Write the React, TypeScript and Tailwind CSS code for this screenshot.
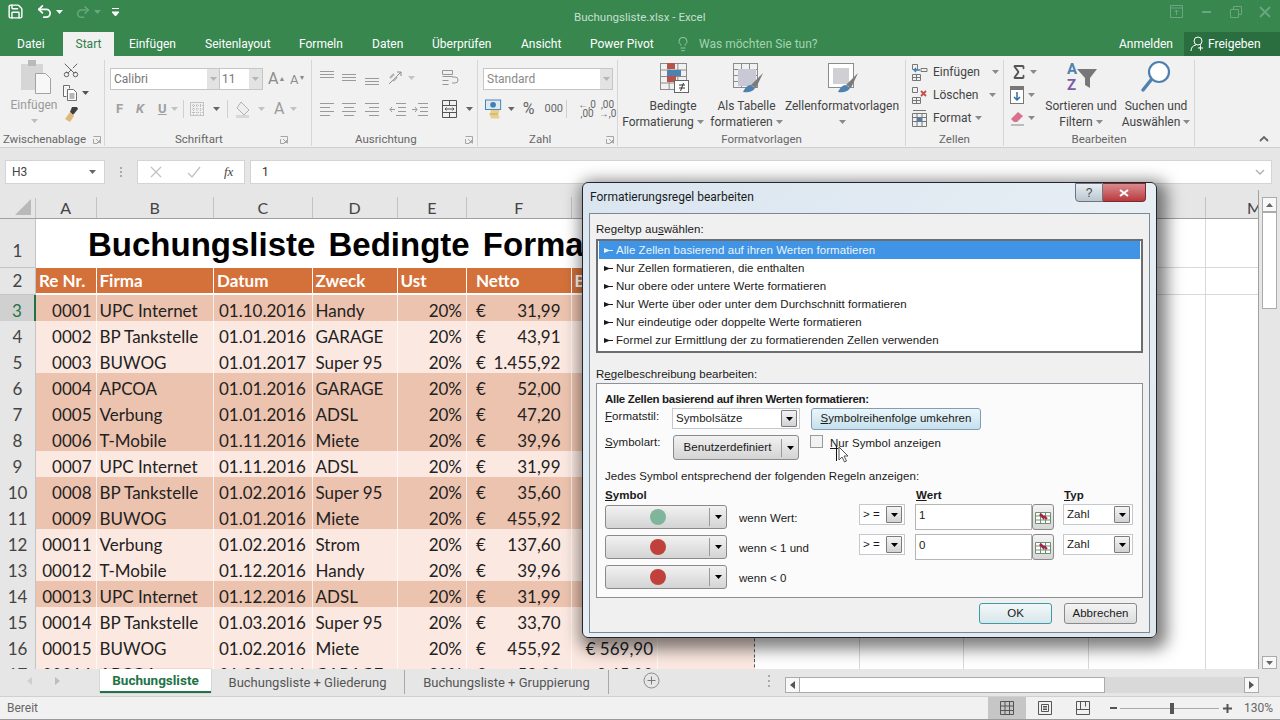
import type { ReactNode } from 'react';
import { Lightbulb, Redo2, Save, Scissors, Sigma, Undo2 } from 'lucide-react';

const sheetCols =
  'grid grid-cols-[36px_60.5px_117.5px_98.5px_85px_69.5px_104.5px_86.5px_97px_105px_104px_125px_117px_98px]';

const rows = [
  ['3', '0001', 'UPC Internet', '01.10.2016', 'Handy', '31,99', 1],
  ['4', '0002', 'BP Tankstelle', '01.01.2016', 'GARAGE', '43,91', 0],
  ['5', '0003', 'BUWOG', '01.01.2017', 'Super 95', '1.455,92', 0],
  ['6', '0004', 'APCOA', '01.01.2016', 'GARAGE', '52,00', 1],
  ['7', '0005', 'Verbung', '01.01.2016', 'ADSL', '47,20', 1],
  ['8', '0006', 'T-Mobile', '01.11.2016', 'Miete', '39,96', 1],
  ['9', '0007', 'UPC Internet', '01.11.2016', 'ADSL', '31,99', 0],
  ['10', '0008', 'BP Tankstelle', '01.02.2016', 'Super 95', '35,60', 1],
  ['11', '0009', 'BUWOG', '01.01.2016', 'Miete', '455,92', 1],
  ['12', '00011', 'Verbung', '01.02.2016', 'Strom', '137,60', 0],
  ['13', '00012', 'T-Mobile', '01.12.2016', 'Handy', '39,96', 0],
  ['14', '00013', 'UPC Internet', '01.12.2016', 'ADSL', '31,99', 1],
  ['15', '00014', 'BP Tankstelle', '01.03.2016', 'Super 95', '33,70', 0],
  ['16', '00015', 'BUWOG', '01.02.2016', 'Miete', '455,92', 0],
  ['17', '00016', 'APCOA', '01.03.2016', 'GARAGE', '52,00', 0],
] as const;

const ruleTypes = [
  'Alle Zellen basierend auf ihren Werten formatieren',
  'Nur Zellen formatieren, die enthalten',
  'Nur obere oder untere Werte formatieren',
  'Nur Werte über oder unter dem Durchschnitt formatieren',
  'Nur eindeutige oder doppelte Werte formatieren',
  'Formel zur Ermittlung der zu formatierenden Zellen verwenden',
];

function Caret({ className = 'text-[#8a8a8a]' }: { className?: string }) {
  return (
    <svg width="7" height="4" viewBox="0 0 7 4" className={className}>
      <path d="M0 0h7L3.5 4z" fill="currentColor" />
    </svg>
  );
}

function Lines({ widths, align = 'left', color = '#9a9a9a' }: { widths: number[]; align?: string; color?: string }) {
  return (
    <svg width="16" height="14" viewBox="0 0 16 14">
      {widths.map((w, i) => {
        const x = align === 'left' ? 1 : align === 'right' ? 15 - w : 8 - w / 2;
        return <rect key={i} x={x} y={1 + i * 4} width={w} height="1" fill={color} />;
      })}
    </svg>
  );
}

function VAlign({ pos }: { pos: number }) {
  return (
    <svg width="16" height="14" viewBox="0 0 16 14">
      {[0, 1, 2].map((i) => (
        <rect key={i} x="1" y={pos + i * 3} width="14" height="1" fill="#9a9a9a" />
      ))}
    </svg>
  );
}

function Launcher() {
  return (
    <svg width="8" height="8" viewBox="0 0 8 8" className="shrink-0">
      <path d="M.5.5h7v7M.5 3v4.500h4M3 3l3.500 3.500M6.500 4v2.500H4" fill="none" stroke="#a6a6a6" />
    </svg>
  );
}

function Group({ width, label, launcher, children, labelPad = '' }: { width: string; label: string; launcher?: boolean; children: ReactNode; labelPad?: string }) {
  return (
    <div className={`${width} shrink-0 flex flex-col h-[86px] mt-[4px] border-r border-[#d6d6d6]`}>
      <div className="flex-1 min-h-0">{children}</div>
      <div className={`h-[12px] flex items-center justify-center gap-[7px] text-[11.500px] text-[#666] whitespace-nowrap ${labelPad}`}>
        <span>{label}</span>
        {launcher && <Launcher />}
      </div>
    </div>
  );
}

function BigIcon({ children }: { children: ReactNode }) {
  return <svg width="36" height="34" viewBox="0 0 36 34">{children}</svg>;
}

function TableGrid({ x, y, w, h, n = 3, m = 4 }: { x: number; y: number; w: number; h: number; n?: number; m?: number }) {
  return (
    <g stroke="#8c8c8c" strokeWidth="1" fill="none">
      <rect x={x + 0.5} y={y + 0.5} width={w} height={h} />
      {Array.from({ length: n - 1 }, (_, i) => (
        <path key={i} d={`M${x + ((i + 1) * w) / n + 0.5} ${y}v${h}`} />
      ))}
      {Array.from({ length: m - 1 }, (_, i) => (
        <path key={i} d={`M${x} ${y + ((i + 1) * h) / m + 0.5}h${w}`} />
      ))}
    </g>
  );
}

function Brush() {
  return (
    <g>
      <path d="M34 13 27 28l-5-3z" fill="#7b7b7b" />
      <path d="M22 25c-4 0-6 3-8 7 4 1 10 0 12-4z" fill="#4f81ae" />
    </g>
  );
}

function Ribbon() {
  return (
    <div className="h-[92px] shrink-0 bg-[#f1f1f1] border-b border-[#cfcfcf] flex text-[#444]">
      <Group width="w-[105px]" label="Zwischenablage" launcher>
        <div className="flex">
          <div className="w-[62px] flex flex-col items-center pl-[6px] text-[#9a9a9a] text-[12px]">
            <svg width="32" height="34" viewBox="0 0 32 34" className="ml-[6px]">
              <rect x="0" y="4" width="22" height="26" fill="#d6d6d6" />
              <rect x="7" y="0" width="8" height="6" fill="#b9b9b9" />
              <path d="M14.500 13.500h10l5 5v15h-15z" fill="#f7f7f7" stroke="#a3a3a3" />
            </svg>
            <span className="mt-[4px] leading-[15px]">Einfügen</span>
            <Caret className="text-[#bdbdbd] mt-[6px]" />
          </div>
          <div className="flex flex-col pt-[1px] gap-[5px]">
            <Scissors size={18} className="-rotate-90 text-[#5f5f5f]" strokeWidth={1.3} />
            <div className="flex items-center gap-[4px]">
              <svg width="16" height="17" viewBox="0 0 16 17">
                <path d="M1.500 1.500h6v3M1.500 1.500v11h3M5.500 5.500h6l3 3v8h-9z" fill="#fff" stroke="#6e6e6e" />
                <path d="M7.500 10h5M7.500 12h5M7.500 14h5" stroke="#6e6e6e" />
              </svg>
              <Caret className="text-[#555]" />
            </div>
            <svg width="18" height="18" viewBox="0 0 18 18">
              <path d="M10 1h5l1 2-5 6-3-3z" fill="#3f3f3f" />
              <path d="M8 6l4 4-4 6-5-3z" fill="#e0b878" />
            </svg>
          </div>
        </div>
      </Group>

      <Group width="w-[207px]" label="Schriftart" launcher labelPad="pl-[70px] !justify-start !gap-[57px]">
        <div className="flex flex-col">
          <div className="flex items-center pl-[5px] mt-[8px]">
            <div className="w-[110px] h-[22px] bg-white border border-[#c6c6c6] flex justify-between items-center text-[12px] text-[#777]">
              <span className="pl-[3px]">Calibri</span>
              <span className="w-[12px] h-full bg-[#e3e3e3] flex items-center justify-center"><Caret className="text-[#b5b5b5]" /></span>
            </div>
            <div className="w-[43px] h-[22px] bg-white border border-l-0 border-[#c6c6c6] flex justify-between items-center text-[12px] text-[#777]">
              <span className="pl-[2px]">11</span>
              <span className="w-[13px] h-full bg-[#e3e3e3] flex items-center justify-center"><Caret className="text-[#b5b5b5]" /></span>
            </div>
            <span className="ml-[5px] text-[16px] leading-none text-[#8c8c8c] w-[22px]">A<sup className="text-[7px]">▲</sup></span>
            <span className="text-[13px] leading-none text-[#8c8c8c]">A<sup className="text-[7px]">▼</sup></span>
          </div>
          <div className="flex items-center h-[20px] mt-[9px] text-[#a0a0a0] font-bold text-[13px]">
            <span className="ml-[11px] w-[20px]">F</span>
            <span className="w-[22px] italic">K</span>
            <span className="w-[13px] underline">U</span>
            <span className="w-[12px] flex"><Caret className="text-[#c2c2c2]" /></span>
            <span className="w-[1px] h-[18px] bg-[#d0d0d0] mr-[6px]" />
            <svg width="14" height="14" viewBox="0 0 14 14" className="mr-[9px]">
              <rect x=".5" y=".5" width="13" height="13" fill="none" stroke="#999" strokeDasharray="1 1" />
              <path d="M7 0v14M0 7h14M3.500 0v14M10.500 0v14M0 3.500h14M0 10.500h14" stroke="#bbb" strokeDasharray="1 1" />
            </svg>
            <Caret className="text-[#666]" />
            <span className="w-[1px] h-[18px] bg-[#d0d0d0] mx-[7px]" />
            <svg width="18" height="18" viewBox="0 0 18 18" className="mr-[5px]">
              <path d="M6 2l8 8-5 5-7-7z" fill="#eee" stroke="#b2b2b2" />
              <rect x="1" y="15" width="13" height="3" fill="#d8d8d8" />
            </svg>
            <Caret className="text-[#c2c2c2]" />
            <span className="ml-[9px] text-[16px] font-normal text-[#9a9a9a] w-[16px]">A</span>
            <Caret className="text-[#c2c2c2]" />
          </div>
        </div>
      </Group>

      <Group width="w-[166px]" label="Ausrichtung" launcher labelPad="pl-[43px] !justify-start !gap-[48px]">
        <div className="flex flex-col">
          <div className="flex items-center pl-[7px] mt-[7px] h-[22px]">
            <span className="w-[22px]"><VAlign pos={0} /></span>
            <span className="w-[23px]"><VAlign pos={3} /></span>
            <span className="w-[24px]"><VAlign pos={7} /></span>
            <svg width="18" height="16" viewBox="0 0 18 16" className="mr-[2px]">
              <path d="M1 14 13 2M9 2h4v4" fill="none" stroke="#8a8a8a" />
              <path d="M2 8l4-4M5 11l4-4" stroke="#b0b0b0" strokeWidth="2" />
            </svg>
            <Caret className="text-[#c2c2c2]" />
            <svg width="18" height="18" viewBox="0 0 18 18" className="ml-[26px]">
              <path d="M1.500 1.500h10v4h-10zM1.500 7.500h10M1.500 11.500h6M1.500 15.500h6M11 8h3q3 0 3 3t-3 3h-3" fill="none" stroke="#969696" />
            </svg>
          </div>
          <div className="flex items-center pl-[7px] mt-[9px] h-[22px]">
            <span className="w-[22px]"><Lines widths={[14, 10, 14, 10]} /></span>
            <span className="w-[23px]"><Lines widths={[14, 10, 14, 10]} align="center" /></span>
            <span className="w-[25px]"><Lines widths={[14, 10, 14, 10]} align="right" /></span>
            <svg width="17" height="14" viewBox="0 0 17 14" className="mr-[5px]">
              <path d="M7 1.500h10M9 5.500h8M9 9.500h8M7 13.500h10M6 7.500H1M3 5 1 7.500 3 10" fill="none" stroke="#9a9a9a" />
            </svg>
            <svg width="17" height="14" viewBox="0 0 17 14">
              <path d="M7 1.500h10M9 5.500h8M9 9.500h8M7 13.500h10M1 7.500h5M4 5l2 2.500L4 10" fill="none" stroke="#9a9a9a" />
            </svg>
            <svg width="15" height="18" viewBox="0 0 15 18" className="ml-[14px] mr-[9px]">
              <path d="M.5.500h14v17H.5zM.5 5.500h14M.5 12.500h14M7.500.500v5M7.500 12.500v5M3 9h9M4.500 7.500 3 9l1.500 1.500M10.500 7.500 12 9l-1.500 1.500" fill="none" stroke="#555" />
            </svg>
            <Caret className="text-[#666]" />
          </div>
        </div>
      </Group>

      <Group width="w-[140px]" label="Zahl" launcher labelPad="pl-[51px] !justify-start !gap-[55px]">
        <div className="flex flex-col">
          <div className="ml-[5px] mt-[8px] w-[130px] h-[22px] bg-white border border-[#c6c6c6] flex justify-between items-center text-[12px] text-[#8a8a8a]">
            <span className="pl-[3px]">Standard</span>
            <span className="w-[12px] h-full bg-[#e3e3e3] flex items-center justify-center"><Caret className="text-[#b5b5b5]" /></span>
          </div>
          <div className="flex items-center h-[22px] mt-[8px] pl-[7px] text-[#666]">
            <svg width="18" height="20" viewBox="0 0 18 20" className="mr-[6px]">
              <rect x=".5" y=".5" width="16" height="10" fill="#dfe9f2" stroke="#3f7fb3" />
              <circle cx="8.500" cy="5.500" r="3" fill="#3f7fb3" />
              <rect x="6" y="11" width="9" height="3" fill="#e8cf8d" />
              <rect x="5" y="14" width="9" height="3" fill="#dcbc6a" />
              <rect x="6" y="17" width="9" height="3" fill="#e8cf8d" />
            </svg>
            <Caret className="text-[#666]" />
            <span className="ml-[8px] w-[23px] text-[16px] leading-none">%</span>
            <span className="w-[23px] text-[11px]">000</span>
            <span className="w-[1px] h-[18px] bg-[#d0d0d0] mr-[9px]" />
            <span className="w-[23px] text-[10px] leading-[9px] text-center">←,0<br />,00</span>
            <span className="w-[20px] text-[10px] leading-[9px] text-center">,00<br />→,0</span>
          </div>
        </div>
      </Group>

      <Group width="w-[288px]" label="Formatvorlagen">
        <div className="flex text-[12px] text-[#444] leading-[16px] text-center whitespace-nowrap">
          <div className="w-[92px] flex flex-col items-center pl-[18px]">
            <BigIcon>
              <TableGrid x={5} y={3} w={26} h={26} />
              <rect x="12" y="3" width="8" height="6" fill="#b7544a" />
              <rect x="12" y="10" width="14" height="6" fill="#4f81ae" />
              <rect x="12" y="16" width="9" height="6" fill="#b7544a" />
              <rect x="19.500" y="20.500" width="14" height="12" fill="#fff" stroke="#666" />
              <path d="M24 25h6M24 28h6M28.500 23l-3 8" stroke="#333" fill="none" />
            </BigIcon>
            <span className="mt-[4px]">Bedingte</span>
            <span className="flex items-center gap-[3px] -ml-[20px]">Formatierung <Caret /></span>
          </div>
          <div className="w-[73px] flex flex-col items-center">
            <BigIcon>
              <TableGrid x={4} y={3} w={24} h={24} />
              <rect x="9" y="9" width="18" height="17" fill="#c9c9d6" />
              <Brush />
            </BigIcon>
            <span className="mt-[4px]">Als Tabelle</span>
            <span className="flex items-center gap-[3px]">formatieren <Caret /></span>
          </div>
          <div className="w-[118px] flex flex-col items-center">
            <BigIcon>
              <rect x="4.500" y="3.500" width="25" height="24" fill="#fff" stroke="#8c8c8c" />
              <rect x="9" y="8" width="16" height="16" fill="#cfcfd4" />
              <Brush />
            </BigIcon>
            <span className="mt-[4px]">Zellenformatvorlagen</span>
            <span className="h-[16px] flex items-center"><Caret /></span>
          </div>
        </div>
      </Group>

      <Group width="w-[98px]" label="Zellen">
        <div className="flex flex-col text-[12px] pl-[6px] leading-[16px]">
          <div className="flex items-center h-[23px]">
            <svg width="16" height="18" viewBox="0 0 16 18" className="mr-[5px]">
              <path d="M.5 1.500h5v5h-5zM.5 11.500h8v6h-8zM4.500 11.500v6M.5 14.500h8M9 8.500h6v-3H9z" fill="none" stroke="#777" />
              <path d="M8 7H2M4 5 2 7l2 2" fill="none" stroke="#3f7fb3" strokeWidth="1.300" />
            </svg>
            <span className="w-[59px]">Einfügen</span>
            <Caret />
          </div>
          <div className="flex items-center h-[23px]">
            <svg width="16" height="18" viewBox="0 0 16 18" className="mr-[5px]">
              <path d="M.5 1.500h5v5h-5zM.5 11.500h8v6h-8zM4.500 11.500v6M.5 14.500h8" fill="none" stroke="#777" />
              <path d="M9 5l5 5M14 5l-5 5" stroke="#c0504d" strokeWidth="1.800" />
            </svg>
            <span className="w-[56px]">Löschen</span>
            <Caret />
          </div>
          <div className="flex items-center h-[23px]">
            <svg width="16" height="18" viewBox="0 0 16 18" className="mr-[5px]">
              <path d="M.5 4.500h14v13H.5zM.5 8.500h14M.5 12.500h14M5 4.500v13M10 4.500v13M1 1.500h13" fill="none" stroke="#777" />
              <rect x="5" y="8.500" width="5" height="4" fill="#4f81ae" />
            </svg>
            <span className="w-[42px]">Format</span>
            <Caret />
          </div>
        </div>
      </Group>

      <Group width="w-[191px]" label="Bearbeiten">
        <div className="flex text-[12px] leading-[16px] text-center whitespace-nowrap">
          <div className="w-[36px] flex flex-col pl-[6px]">
            <div className="flex items-center h-[23px] gap-[2px]">
              <Sigma size={18} strokeWidth={2.4} className="text-[#555] shrink-0" />
              <Caret />
            </div>
            <div className="flex items-center h-[23px] gap-[3px]">
              <svg width="15" height="18" viewBox="0 0 15 18" className="shrink-0">
                <rect x=".5" y=".5" width="13" height="17" fill="#fff" stroke="#777" />
                <rect x="1" y="1" width="12" height="3" fill="#777" />
                <path d="M7 6v8M4 11l3 3 3-3" fill="none" stroke="#2f6ea5" strokeWidth="1.500" />
              </svg>
              <Caret />
            </div>
            <div className="flex items-center h-[23px] gap-[3px]">
              <svg width="15" height="16" viewBox="0 0 15 16" className="shrink-0">
                <path d="M1 9l7-7 5 4-6 6H4z" fill="#d9708c" />
                <path d="M1 15h13" stroke="#888" />
              </svg>
              <Caret />
            </div>
          </div>
          <div className="w-[74px] ml-[4px] flex flex-col items-center">
            <svg width="36" height="34" viewBox="0 0 36 34">
              <text x="4" y="14" fontSize="15" fontWeight="700" fill="#4f81ae" fontFamily="Roboto, sans-serif">A</text>
              <text x="4" y="30" fontSize="15" fontWeight="700" fill="#7d5ba6" fontFamily="Roboto, sans-serif">Z</text>
              <path d="M14 9h20l-7 9v10l-5-3v-7z" fill="#777" />
            </svg>
            <span className="mt-[4px]">Sortieren und</span>
            <span className="flex items-center gap-[3px]">Filtern <Caret /></span>
          </div>
          <div className="w-[76px] flex flex-col items-center">
            <svg width="36" height="34" viewBox="0 0 36 34">
              <circle cx="21" cy="12" r="10" fill="#fff" stroke="#4f81ae" strokeWidth="2.200" />
              <path d="M13 20 5 30" stroke="#4f81ae" strokeWidth="3.500" strokeLinecap="round" />
            </svg>
            <span className="mt-[4px]">Suchen und</span>
            <span className="flex items-center gap-[3px]">Auswählen <Caret /></span>
          </div>
        </div>
      </Group>

      <div className="flex-1 flex items-end justify-end pb-[5px] pr-[11px]">
        <svg width="10" height="6" viewBox="0 0 10 6">
          <path d="M1 5l4-4 4 4" fill="none" stroke="#666" strokeWidth="1.800" />
        </svg>
      </div>
    </div>
  );
}

function FormulaBar() {
  return (
    <div className="h-[42px] shrink-0 bg-[#e6e6e6] flex items-start pt-[12px] pl-[5px] pr-[8px]">
      <div className="w-[100px] h-[24px] bg-white border border-[#d4d4d4] flex items-center justify-between px-[6px] text-[12px] text-[#444]">
        <span>H3</span>
        <Caret className="text-[#666] mr-[2px]" />
      </div>
      <div className="w-[32px] h-[24px] flex flex-col items-center justify-center gap-[2px]">
        <span className="w-[2px] h-[2px] bg-[#aaa]" />
        <span className="w-[2px] h-[2px] bg-[#aaa]" />
        <span className="w-[2px] h-[2px] bg-[#aaa]" />
      </div>
      <div className="w-[108px] h-[24px] bg-white border border-[#d4d4d4] flex items-center pl-[12px]">
        <svg width="12" height="12" viewBox="0 0 12 12" className="mr-[25px]">
          <path d="M1 1l10 10M11 1 1 11" stroke="#c2c2c2" strokeWidth="1.300" />
        </svg>
        <svg width="14" height="12" viewBox="0 0 14 12" className="mr-[23px]">
          <path d="M1 7l4 4 8-10" fill="none" stroke="#c2c2c2" strokeWidth="1.300" />
        </svg>
        <span className="font-['Liberation_Serif',serif] italic text-[13px] text-[#444]">fx</span>
      </div>
      <div className="ml-[5px] flex-1 h-[24px] bg-white border border-[#d4d4d4] flex items-center justify-between pl-[11px] pr-[6px] text-[12px] text-[#333]">
        <span>1</span>
        <svg width="10" height="6" viewBox="0 0 10 6">
          <path d="M1 1l4 4 4-4" fill="none" stroke="#b5b5b5" strokeWidth="1.500" />
        </svg>
      </div>
    </div>
  );
}

function HeaderRow() {
  const letters = ['A', 'B', 'C', 'D', 'E', 'F', 'G', 'H', 'I', 'J', 'K', 'L', 'M'];
  return (
    <div className={`${sheetCols} h-[29px] bg-[#e6e6e6] border-b border-[#a0a0a0] text-[16px] text-[#444] box-border`}>
      <div className="flex items-end justify-end pr-[4px] pb-[3px] border-r border-[#c4c4c4] mt-[8px]">
        <svg width="16" height="16" viewBox="0 0 16 16">
          <path d="M16 0v16H0z" fill="#b9b9b9" />
        </svg>
      </div>
      {letters.map((l) => (
        <div key={l} className="flex items-center justify-center border-r border-[#c4c4c4] mt-[7px] h-[21px]">
          {l}
        </div>
      ))}
    </div>
  );
}

function EmptyCells() {
  return (
    <>
      {[0, 1, 2, 3, 4].map((i) => (
        <div key={i} className="border-r border-b border-[#d9d9d9] bg-white" />
      ))}
    </>
  );
}

function Sheet() {
  return (
    <div className="h-[479px] shrink-0 flex bg-[#e6e6e6]">
      <div className="w-[1259px] overflow-hidden border-r border-[#a0a0a0] font-['Lato',sans-serif] text-[#222]">
        <HeaderRow />
        <div className={`${sheetCols} h-[49px]`}>
          <div className="bg-[#e6e6e6] border-r border-b border-[#c4c4c4] flex items-end justify-center pb-[4px] text-[17px] text-[#444]">1</div>
          <div className="col-span-8 bg-white flex items-center pl-[52px] pt-[2px] overflow-hidden whitespace-nowrap font-['Liberation_Sans',sans-serif] font-bold text-[33px] [word-spacing:4px] text-black">
            Buchungsliste Bedingte Formatierung
          </div>
          <EmptyCells />
        </div>
        <div className={`${sheetCols} h-[27px] text-[17px] font-bold text-white`}>
          <div className="bg-[#e6e6e6] border-r border-b border-[#c4c4c4] flex items-center justify-center font-normal text-[#444]">2</div>
          {['Re Nr.', 'Firma', 'Datum', 'Zweck', 'Ust', 'Netto', 'Brutto', ''].map((h, i) => (
            <div key={i} className={`bg-[#d4713a] border-r border-b-2 border-white flex items-center whitespace-nowrap overflow-hidden pt-[1px] ${i === 5 ? 'pl-[9px]' : 'pl-[3px]'}`}>
              {h}
            </div>
          ))}
          <EmptyCells />
        </div>
        {rows.map((r) => {
          const bg = r[6] ? 'bg-[#ecc3af]' : 'bg-[#fbe8e0]';
          const cell = `${bg} border-r border-b border-[#fff]/70 flex items-center whitespace-nowrap overflow-hidden pt-[3px]`;
          const selected = r[0] === '3';
          return (
            <div key={r[0]} className={`${sheetCols} h-[26px] text-[17px]`}>
              <div className={`flex items-center justify-center border-b border-[#c4c4c4] pt-[3px] ${selected ? 'bg-[#d0d0d0] border-r-2 border-r-[#217346] text-[#217346]' : 'bg-[#e6e6e6] border-r border-r-[#c4c4c4] text-[#444]'}`}>{r[0]}</div>
              <div className={`${cell} justify-end pr-[4px]`}>{r[1]}</div>
              <div className={`${cell} pl-[3px]`}>{r[2]}</div>
              <div className={`${cell} pl-[5px]`}>{r[3]}</div>
              <div className={`${cell} pl-[3px]`}>{r[4]}</div>
              <div className={`${cell} justify-end pr-[4px]`}>20%</div>
              <div className={`${cell} justify-between pl-[9px] pr-[10px]`}>
                <span>€</span>
                <span>{r[5]}</span>
              </div>
              <div className={`${cell} justify-end pr-[4px]`}>
                {r[0] === '16' ? '€ 569,90' : r[0] === '17' ? '€ 65,00' : ''}
              </div>
              <div className={`${bg} border-b border-[#fff]/70 border-r border-r-[#555] border-dashed`} />
              <EmptyCells />
            </div>
          );
        })}
      </div>
      <div className="flex-1 flex flex-col items-center pt-[7px] pl-[2px] pr-[2px]">
        <div className="w-[15px] h-[15px] bg-[#f8f8f8] border border-[#ababab] flex items-center justify-center">
          <Caret className="text-[#666] rotate-180" />
        </div>
        <div className="w-[15px] h-[97px] bg-white border border-[#ababab]" />
        <div className="flex-1" />
        <div className="w-[15px] h-[13px] bg-[#f8f8f8] border border-[#ababab] flex items-center justify-center">
          <Caret className="text-[#666]" />
        </div>
      </div>
    </div>
  );
}

function TabsBar() {
  return (
    <div className="h-[28px] shrink-0 bg-[#e6e6e6] flex border-b border-[#d0d0d0] text-[13px] text-[#555]">
      <div className="w-[100px] flex items-center pb-[4px] pl-[27px] gap-[23px]">
        <svg width="5" height="8" viewBox="0 0 5 8"><path d="M5 0v8L0 4z" fill="#cfcfcf" /></svg>
        <svg width="5" height="8" viewBox="0 0 5 8"><path d="M0 0v8l5-4z" fill="#bdbdbd" /></svg>
      </div>
      <div className="w-[111px] h-[24px] bg-white border-b-2 border-[#217346] flex items-center justify-center pt-[1px] font-bold text-[13.500px] text-[#217346] shadow-[0_0_1px_rgba(0,0,0,0.4)]">
        Buchungsliste
      </div>
      <div className="w-[194px] h-[24px] flex items-center justify-center pt-[2px] border-r border-[#a8a8a8] mt-[1px]">Buchungsliste + Gliederung</div>
      <div className="w-[204px] h-[24px] flex items-center justify-center pt-[2px] border-r border-[#a8a8a8] mt-[1px]">Buchungsliste + Gruppierung</div>
      <div className="w-[84px] flex items-center justify-center pb-[4px]">
        <svg width="17" height="17" viewBox="0 0 17 17">
          <circle cx="8.500" cy="8.500" r="7.500" fill="none" stroke="#8a8a8a" />
          <path d="M8.500 4.500v8M4.500 8.500h8" stroke="#777" />
        </svg>
      </div>
      <div className="ml-[75px] w-[2px] flex flex-col items-center justify-center gap-[3px] pb-[4px]">
        <span className="w-[2px] h-[2px] bg-[#aaa]" />
        <span className="w-[2px] h-[2px] bg-[#aaa]" />
        <span className="w-[2px] h-[2px] bg-[#aaa]" />
      </div>
      <div className="ml-[15px] flex h-[16px] mt-[8px]">
        <div className="w-[15px] bg-[#f8f8f8] border border-[#ababab] flex items-center justify-center">
          <svg width="5" height="8" viewBox="0 0 5 8"><path d="M5 0v8L0 4z" fill="#555" /></svg>
        </div>
        <div className="w-[305px] bg-white border border-l-0 border-[#ababab]" />
        <div className="w-[139px] bg-[#d9d9d9]" />
        <div className="w-[15px] bg-[#f8f8f8] border border-[#ababab] flex items-center justify-center">
          <svg width="5" height="8" viewBox="0 0 5 8"><path d="M0 0v8l5-4z" fill="#555" /></svg>
        </div>
      </div>
    </div>
  );
}

function StatusBar() {
  return (
    <div className="h-[23px] shrink-0 bg-[#f1f1f1] border-b border-[#9a9a9a] flex items-center text-[12px] text-[#666]">
      <span className="pl-[7px] w-[988px]">Bereit</span>
      <div className="w-[38px] h-full bg-[#c6c6c6] flex items-center justify-center">
        <svg width="14" height="14" viewBox="0 0 14 14">
          <path d="M.5.500h13v13H.5zM.5 5h13M.5 9.500h13M5 .500v13M9.500 .500v13" fill="none" stroke="#555" />
        </svg>
      </div>
      <div className="w-[38px] flex justify-center">
        <svg width="14" height="14" viewBox="0 0 14 14">
          <path d="M.5.500h13v13H.5zM3.500 3.500h7v7h-7zM5 5.500h4M5 7h4M5 8.500h4" fill="none" stroke="#555" />
        </svg>
      </div>
      <div className="w-[38px] flex justify-center">
        <svg width="14" height="14" viewBox="0 0 14 14">
          <path d="M.5.500h13v13H.5zM.5 8.500h13M4.500 .500v8M9.500 .500v5" fill="none" stroke="#555" />
        </svg>
      </div>
      <span className="ml-[8px] w-[7px] h-[2px] bg-[#555]" />
      <div className="ml-[3px] w-[99px] h-[1px] bg-[#aaa] flex justify-center items-center pl-[4px]">
        <span className="w-[4px] h-[11px] bg-[#555]" />
      </div>
      <svg width="9" height="9" viewBox="0 0 9 9" className="ml-[4px]">
        <path d="M4.500 0v9M0 4.500h9" stroke="#555" strokeWidth="2" />
      </svg>
      <span className="ml-[12px]">130%</span>
    </div>
  );
}

function DropArrow({ className = 'w-[16px] h-[17px]' }: { className?: string }) {
  return (
    <div className={`${className} bg-gradient-to-b from-[#f4f4f4] to-[#d2d2d2] border border-[#7c7c7c] flex items-center justify-center rounded-[1px]`}>
      <Caret className="text-black" />
    </div>
  );
}

function Combo({ label, className }: { label: string; className: string }) {
  return (
    <div className={`${className} bg-white border border-[#c4c8cf] flex items-center justify-between pl-[3px] pr-[2px]`}>
      <span>{label}</span>
      <DropArrow />
    </div>
  );
}

function SymbolButton({ color }: { color: string }) {
  return (
    <div className="w-[122px] h-[24px] mt-[1px] rounded-[3px] border border-[#8a8a8a] bg-gradient-to-b from-[#f2f2f2] to-[#d4d4d4] flex items-center">
      <span className="flex-1 flex justify-center pl-[1px]">
        <span className={`w-[16px] h-[16px] rounded-full ${color}`} />
      </span>
      <span className="w-[1px] h-[18px] bg-[#9a9a9a]" />
      <span className="w-[16px] flex justify-center"><Caret className="text-black" /></span>
    </div>
  );
}

function RefButton() {
  return (
    <div className="w-[22px] h-[26px] rounded-[3px] border border-[#8a8a8a] bg-gradient-to-b from-[#f4f4f4] to-[#d6d6d6] flex items-center justify-center">
      <svg width="16" height="14" viewBox="0 0 16 14">
        <path d="M.5 2.500h15v11H.5zM.5 6h15M.5 10h15M5.500 2.500v11M10.500 2.500v11" fill="#fff" stroke="#6f8f6f" />
        <path d="M6 3l4 4-1 3-5-5z" fill="#a5224a" />
        <path d="M9 6l3 3" stroke="#a5224a" strokeWidth="2" />
      </svg>
    </div>
  );
}

function RuleRow({ color, label, value, type }: { color: string; label: string; value?: string; type?: boolean }) {
  return (
    <div className="flex h-[26px]">
      <SymbolButton color={color} />
      <span className="ml-[12px] w-[120px] mt-[7px] leading-[14px]">{label}</span>
      {value !== undefined && (
        <>
          <Combo label="> =" className="w-[46px] h-[21px]" />
          <div className="ml-[10px] w-[117px] h-[26px] bg-white border border-[#b5b5b5] pl-[3px] pt-[3px] leading-[14px]">{value}</div>
          <RefButton />
          <span className="w-[9px]" />
          {type && <Combo label="Zahl" className="w-[70px] h-[21px]" />}
        </>
      )}
    </div>
  );
}

function Dialog() {
  return (
    <div className="absolute left-[582px] top-[182px] w-[575px] h-[456px] rounded-[6px] border border-[#23262b] bg-gradient-to-br from-[#d9e5f0] via-[#e7eef4] to-[#dfe7ee] shadow-[4px_5px_16px_6px_rgba(0,0,0,0.5)] flex flex-col font-['Liberation_Sans',sans-serif] text-[11.500px] tracking-[0.05px] text-[#1a1a1a]">
      <div className="h-[30px] shrink-0 flex items-start justify-between pl-[7px] pr-[10px]">
        <span className="mt-[7px] text-[12px] leading-[15px] tracking-normal font-['Roboto',sans-serif]">Formatierungsregel bearbeiten</span>
        <div className="flex">
          <div className="w-[28px] h-[19px] bg-gradient-to-b from-[#e8eef3] to-[#bac6d0] border border-[#6d7680] rounded-bl-[4px] flex items-center justify-center text-[12px] text-[#444]">?</div>
          <div className="w-[43px] h-[19px] bg-gradient-to-b from-[#d98a8f] to-[#b8383f] border border-[#7a2b30] border-l-0 rounded-br-[4px] flex items-center justify-center">
            <svg width="10" height="8" viewBox="0 0 10 8">
              <path d="M1 1l8 6M9 1 1 7" stroke="#fff" strokeWidth="2" />
            </svg>
          </div>
        </div>
      </div>
      <div className="mx-[6px] h-[420px] shrink-0 bg-[#f0f0f0] border border-[#7a8794] px-[6px] flex flex-col">
        <div className="mt-[8px] h-[14px] leading-[14px]">Regeltyp au<u>s</u>wählen:</div>
        <div className="mt-[3px] h-[114px] bg-white border-2 border-[#6a6e73] px-[1px]">
          {ruleTypes.map((t, i) => (
            <div key={t} className={`h-[18px] flex items-center pl-[5px] pt-[1px] gap-[3px] ${i === 0 ? 'bg-[#3f94e6] text-[#eaf3fb]' : ''}`}>
              <span className="w-[9px] text-[10px] leading-none">
                <svg width="9" height="5" viewBox="0 0 9 5"><path d="M0 0l5 2h4v1H5L0 5z" fill="currentColor" /></svg>
              </span>
              <span>{t}</span>
            </div>
          ))}
        </div>
        <div className="mt-[14px] h-[14px] leading-[14px]">R<u>e</u>gelbeschreibung bearbeiten:</div>
        <div className="mt-[2px] h-[215px] bg-[#fbfbfb] border border-[#8a9199] pl-[8px] flex flex-col">
          <div className="mt-[8px] h-[14px] leading-[14px] font-bold tracking-[-0.3px]">Alle Zellen basierend auf ihren Werten formatieren:</div>
          <div className="mt-[2px] flex h-[22px]">
            <span className="w-[67px] mt-[1px] leading-[14px]"><u>F</u>ormatstil:</span>
            <Combo label="Symbolsätze" className="w-[128px] h-[21px]" />
            <div className="ml-[11px] w-[170px] h-[22px] rounded-[3px] border border-[#7f9db9] bg-gradient-to-b from-[#eaf6fb] to-[#c6e0ec] flex items-center justify-center">
              <span><u>S</u>ymbolreihenfolge umkehren</span>
            </div>
          </div>
          <div className="mt-[5px] flex h-[25px]">
            <span className="w-[68px] leading-[14px]"><u>S</u>ymbolart:</span>
            <div className="w-[126px] h-[25px] rounded-[3px] border border-[#8a8a8a] bg-gradient-to-b from-[#f2f2f2] to-[#d4d4d4] flex items-center">
              <span className="flex-1 text-center">Benutzerdefiniert</span>
              <span className="w-[1px] h-[18px] bg-[#9a9a9a]" />
              <span className="w-[16px] flex justify-center"><Caret className="text-black" /></span>
            </div>
            <span className="ml-[11px] w-[13px] h-[13px] bg-[#f2f2f2] border border-[#9a9a9a]" />
            <span className="ml-[7px] mt-[1px] leading-[14px]"><u>N</u>ur Symbol anzeigen</span>
          </div>
          <div className="mt-[9px] h-[14px] leading-[14px]">Jedes Symbol entsprechend der folgenden Regeln anzeigen:</div>
          <div className="mt-[5px] h-[14px] leading-[14px] font-bold flex">
            <span className="w-[311px]"><u>S</u>ymbol</span>
            <span className="w-[148px]"><u>W</u>ert</span>
            <span><u>T</u>yp</span>
          </div>
          <div className="mt-[2px] flex flex-col gap-[4px]">
            <RuleRow color="bg-[#7fb59a]" label="wenn Wert:" value="1" type />
            <RuleRow color="bg-[#c0413c]" label="wenn < 1 und" value="0" type />
            <RuleRow color="bg-[#c0413c]" label="wenn < 0" />
          </div>
        </div>
        <div className="mt-[5px] flex justify-end pr-[6px] gap-[12px]">
          <div className="w-[73px] h-[21px] rounded-[3px] border border-[#3f9aa6] bg-gradient-to-b from-[#f2f8f9] to-[#d8e6ea] flex items-center justify-center">OK</div>
          <div className="w-[73px] h-[21px] rounded-[3px] border border-[#8a8a8a] bg-gradient-to-b from-[#f4f4f4] to-[#dcdcdc] flex items-center justify-center">Abbrechen</div>
        </div>
      </div>
      <svg width="16" height="20" viewBox="0 0 16 20" className="absolute left-[253px] top-[262px]">
        <path d="M.5 2v14" stroke="#111" />
        <path d="M3 2v13l3-3 2.500 5 2-1-2.500-5h4z" fill="#fff" stroke="#555" />
      </svg>
    </div>
  );
}

export default function App() {
  return (
    <div className="relative w-[1280px] h-[720px] overflow-hidden flex flex-col bg-[#e6e6e6] font-['Roboto',sans-serif]">
      <div className="h-[56px] shrink-0 bg-[#37874f] text-white text-[12px]">
        <div className="h-[32px] flex items-start">
          <Save size={17} strokeWidth={2} className="ml-[7px] mt-[3px]" />
          <Undo2 size={17} strokeWidth={2.4} className="ml-[12px] mt-[3px]" />
          <Caret className="text-white ml-[3px] mt-[10px]" />
          <Redo2 size={16} strokeWidth={2.2} className="ml-[12px] mt-[4px] text-[#6aa780]" />
          <Caret className="text-[#6aa780] ml-[3px] mt-[10px]" />
          <svg width="7" height="8" viewBox="0 0 7 8" className="ml-[11px] mt-[8px]">
            <path d="M0 .5h7M0 4h7L3.500 8z" stroke="#fff" fill="#fff" />
          </svg>
          <span className="ml-[455px] mt-[9px] text-[11.500px] text-[#c7dfce] whitespace-nowrap">Buchungsliste.xlsx - Excel</span>
          <div className="ml-auto flex items-center mt-[5px]">
            <span className="w-[29.500px] flex justify-center">
              <svg width="13" height="13" viewBox="0 0 13 13"><path d="M.5.5h12v12H.5zM.5 3h12M6.500 10V5M4.500 7l2-2 2 2" fill="none" stroke="#6aa780" /></svg>
            </span>
            <span className="w-[29.500px] flex justify-center"><span className="w-[9px] h-[2px] bg-[#6aa780]" /></span>
            <span className="w-[29.500px] flex justify-center">
              <svg width="12" height="12" viewBox="0 0 12 12"><path d="M.5 3.500h8v8h-8zM3.500 3.500v-3h8v8h-3" fill="none" stroke="#6aa780" /></svg>
            </span>
            <span className="w-[29.500px] flex justify-center">
              <svg width="12" height="12" viewBox="0 0 12 12"><path d="M1 1l10 10M11 1 1 11" stroke="#6aa780" strokeWidth="1.800" /></svg>
            </span>
          </div>
        </div>
        <div className="h-[24px] flex items-center whitespace-nowrap">
          <span className="ml-[17px] w-[46px]">Datei</span>
          <span className="w-[51px] h-[24px] bg-[#f1f1f1] text-[#2f7d48] flex items-center justify-center">Start</span>
          <span className="ml-[15px] w-[76px]">Einfügen</span>
          <span className="w-[94px]">Seitenlayout</span>
          <span className="w-[73px]">Formeln</span>
          <span className="w-[60px]">Daten</span>
          <span className="w-[89px]">Überprüfen</span>
          <span className="w-[69px]">Ansicht</span>
          <span className="w-[84px]">Power Pivot</span>
          <Lightbulb size={16} strokeWidth={1.3} className="text-[#a5d4b0] ml-[1px]" />
          <span className="ml-[8px] text-[#a5d4b0]">Was möchten Sie tun?</span>
          <span className="ml-auto">Anmelden</span>
          <div className="ml-[11px] w-[96px] h-[24px] bg-[#2a6e40] flex items-center pl-[6px] gap-[3px]">
            <svg width="15" height="16" viewBox="0 0 15 16">
              <circle cx="8" cy="5" r="4" fill="none" stroke="#fff" />
              <path d="M1 15q0-5 5-6M10 9h1M10 12v-1M8 12h5M10.500 9.500v5" fill="none" stroke="#fff" />
            </svg>
            <span>Freigeben</span>
          </div>
        </div>
      </div>
      <Ribbon />
      <FormulaBar />
      <Sheet />
      <TabsBar />
      <StatusBar />
      <Dialog />
    </div>
  );
}
